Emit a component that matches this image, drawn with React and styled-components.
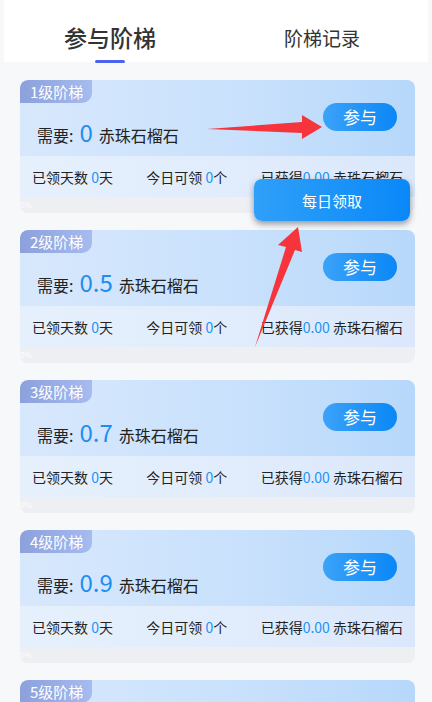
import React from "react";
import styled, { createGlobalStyle } from "styled-components";

const GlobalStyle = createGlobalStyle`
  html, body { margin: 0; padding: 0; }
  body {
    background: #f7f8fa;
    font-family: "Noto Sans CJK SC", "Noto Sans", sans-serif;
    color: #222;
  }
  * { box-sizing: border-box; }
`;

const Page = styled.div`
  position: relative;
  min-height: 702px;
  overflow: hidden;
`;

const Header = styled.div`
  margin: 0 4px;
  height: 62px;
  background: #ffffff;
  display: grid;
  grid-template-columns: 1fr 1fr;
`;

const Tab = styled.div`
  display: flex;
  flex-direction: column;
  align-items: center;
  padding-top: 26px;
`;

const TabLabel = styled.div`
  height: 23px;
  line-height: 23px;
  font-size: ${(p) => (p.$active ? "23px" : "19px")};
  font-weight: ${(p) => (p.$active ? 500 : 400)};
  color: #333;
  white-space: nowrap;
`;

const Underline = styled.div`
  margin-top: 11px;
  width: 30px;
  height: 3px;
  border-radius: 2px;
  background: ${(p) => (p.$show ? "#4a62ef" : "transparent")};
`;

const List = styled.div`
  display: flex;
  flex-direction: column;
  gap: 17px;
  padding: 18px 17px 0 20px;
`;

const Card = styled.div`
  border-radius: 8px;
  overflow: hidden;
  background: #eeeff3;
`;

const Top = styled.div`
  height: 76px;
  display: flex;
  flex-direction: column;
  align-items: flex-start;
  background: linear-gradient(90deg, #d8e8fc 0%, #c9e1fc 55%, #b7d8fb 100%);
`;

const Badge = styled.div`
  height: 23px;
  line-height: 23px;
  padding: 0 9px 0 10px;
  font-size: 15px;
  color: #fff;
  border-radius: 8px 0 10px 0;
  background: linear-gradient(90deg, #8ca1dc 0%, #a6bbef 100%);
  white-space: nowrap;
`;

const Body = styled.div`
  align-self: stretch;
  flex: 1;
  display: flex;
  justify-content: space-between;
  align-items: flex-start;
  padding: 0 18px 0 17px;
`;

const Need = styled.div`
  margin-top: 16px;
  height: 26px;
  display: flex;
  align-items: baseline;
  font-size: 16px;
  line-height: 26px;
  color: #222;
  white-space: nowrap;
`;

const Amount = styled.span`
  font-size: 24px;
  color: #1b8ef2;
  margin: 0 6px 0 6px;
`;

const JoinButton = styled.button`
  width: 74px;
  height: 28px;
  border: none;
  border-radius: 14px;
  padding: 0;
  font-family: inherit;
  font-size: 17px;
  line-height: 28px;
  color: #fff;
  background: linear-gradient(90deg, #3ba2f8 0%, #0b87f6 100%);
`;

const Stats = styled.div`
  height: 41px;
  display: flex;
  justify-content: space-between;
  align-items: center;
  padding: 0 12px;
  font-size: 14px;
  color: #222;
  background: linear-gradient(90deg, #e6f0fd 0%, #e0ecfc 60%, #dbe8fb 100%);
  white-space: nowrap;
`;

const Blue = styled.span`
  color: #2193f3;
`;

const Progress = styled.div`
  height: 16px;
  display: flex;
  align-items: center;
  font-size: 8px;
  line-height: 1;
  color: rgba(255, 255, 255, 0.85);
  background: #eeeff3;
`;

const DailyButton = styled.div`
  position: absolute;
  left: 254px;
  top: 179px;
  width: 156px;
  height: 42px;
  border-radius: 8px;
  display: flex;
  align-items: center;
  justify-content: center;
  font-size: 15px;
  color: #fff;
  background: linear-gradient(90deg, #2fa0f8 0%, #0a88f8 100%);
  box-shadow: 0 3px 6px rgba(20, 30, 50, 0.45);
`;

const Overlay = styled.svg`
  position: absolute;
  left: 0;
  top: 0;
  pointer-events: none;
`;

const levels = [
  { level: 1, need: "0" },
  { level: 2, need: "0.5" },
  { level: 3, need: "0.7" },
  { level: 4, need: "0.9" },
  { level: 5, need: "1.1" },
];

function LadderCard({ level, need }) {
  return (
    <Card>
      <Top>
        <Badge>{level}级阶梯</Badge>
        <Body>
          <Need>
            需要:<Amount>{need}</Amount>赤珠石榴石
          </Need>
          <JoinButton>参与</JoinButton>
        </Body>
      </Top>
      <Stats>
        <span>
          已领天数 <Blue>0</Blue>天
        </span>
        <span>
          今日可领 <Blue>0</Blue>个
        </span>
        <span>
          已获得<Blue>0.00</Blue> 赤珠石榴石
        </span>
      </Stats>
      <Progress>0%</Progress>
    </Card>
  );
}

export default function App() {
  return (
    <Page>
      <GlobalStyle />
      <Header>
        <Tab>
          <TabLabel $active>参与阶梯</TabLabel>
          <Underline $show />
        </Tab>
        <Tab>
          <TabLabel>阶梯记录</TabLabel>
          <Underline />
        </Tab>
      </Header>
      <List>
        {levels.map((l) => (
          <LadderCard key={l.level} {...l} />
        ))}
      </List>
      <DailyButton>每日领取</DailyButton>
      <Overlay width="432" height="702" viewBox="0 0 432 702">
        <polygon
          points="207,129 302,122 302,115 322,127 302,139 302,133"
          fill="#f5343c"
        />
        <polygon
          points="255,347 286,247 278,245 298,227 302,252 295,250"
          fill="#f5343c"
        />
      </Overlay>
    </Page>
  );
}
